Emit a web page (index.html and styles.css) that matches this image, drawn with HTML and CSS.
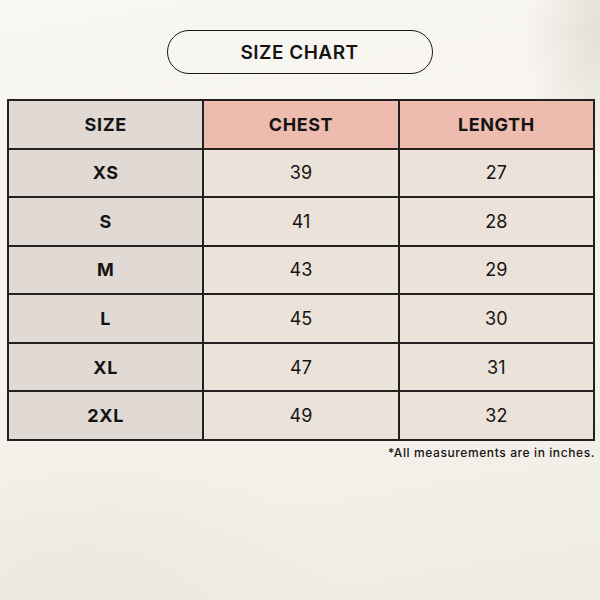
FILE: index.html
```html
<!DOCTYPE html>
<html lang="en">
<head>
<meta charset="utf-8">
<title>Size Chart</title>
<link rel="stylesheet" href="styles.css">
</head>
<body>
<main class="page">
  <div class="title-wrap"><h1 class="title">SIZE CHART</h1></div>
  <div class="chart">
    <div class="cell size head">SIZE</div>
    <div class="cell pink head">CHEST</div>
    <div class="cell pink head">LENGTH</div>

    <div class="cell size">XS</div><div class="cell val">39</div><div class="cell val">27</div>
    <div class="cell size">S</div><div class="cell val">41</div><div class="cell val">28</div>
    <div class="cell size">M</div><div class="cell val">43</div><div class="cell val">29</div>
    <div class="cell size">L</div><div class="cell val">45</div><div class="cell val">30</div>
    <div class="cell size">XL</div><div class="cell val">47</div><div class="cell val">31</div>
    <div class="cell size">2XL</div><div class="cell val">49</div><div class="cell val">32</div>
  </div>
  <p class="note">*All measurements are in inches.</p>
</main>
</body>
</html>
```
FILE: styles.css
```css
* { box-sizing: border-box; }
html, body { margin: 0; height: 100%; }
body {
  width: 600px;
  height: 600px;
  overflow: hidden;
  font-family: Inter, "Open Sans", "Liberation Sans", sans-serif;
  color: #161413;
  background:
    radial-gradient(ellipse 70px 150px at 595px 30px, rgba(222,217,209,0.75), rgba(222,217,209,0) 100%),
    radial-gradient(ellipse 260px 160px at 80px 600px, rgba(232,227,219,0.6), rgba(232,227,219,0) 100%),
    linear-gradient(170deg, #f9f7f2 0%, #f6f3ed 55%, #efebe4 100%);
}
.page {
  display: flex;
  flex-direction: column;
  padding: 30px 5px 0 7px;
}
.title-wrap { display: flex; justify-content: center; padding-right: 3px; }
.title {
  margin: 0;
  width: 266px;
  height: 44px;
  border: 1.5px solid #1c1a19;
  border-radius: 22px;
  display: flex;
  align-items: center;
  justify-content: center;
  font-size: 19px;
  font-weight: 600;
  letter-spacing: 0.5px;
}
.chart {
  margin-top: 25px;
  width: 588px;
  height: 342px;
  display: grid;
  grid-template-columns: repeat(3, 1fr);
  grid-template-rows: repeat(7, 1fr);
  gap: 2px;
  padding: 2px;
  background: #232120;
}
.cell {
  display: flex;
  align-items: center;
  justify-content: center;
  font-size: 18px;
}
.size { background: #e0d9d4; font-weight: 700; letter-spacing: 0.6px; }
.pink { background: #eebcaf; font-weight: 700; letter-spacing: 0.6px; }
.val { background: #ebe3d9; font-weight: 400; }
.note {
  margin: 4px 0 0;
  align-self: flex-end;
  font-size: 12px;
  font-weight: 500;
  letter-spacing: 0.6px;
}
```
